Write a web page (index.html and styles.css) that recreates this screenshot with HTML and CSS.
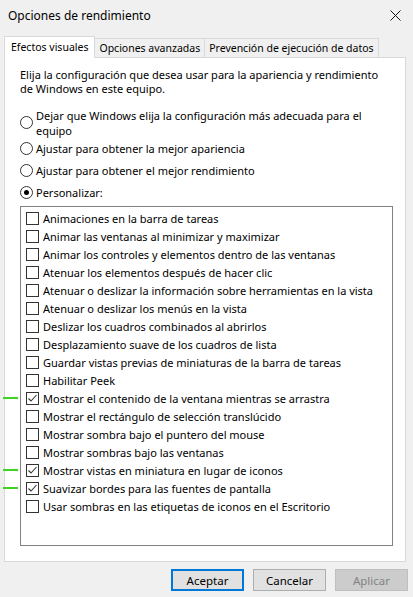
FILE: index.html
```html
<!DOCTYPE html>
<html lang="es">
<head>
<meta charset="utf-8">
<link rel="stylesheet" href="styles.css">
</head>
<body>
<div class="window">
  <div class="titlebar">
    <span class="title">Opciones de rendimiento</span>
    <svg class="close" width="11" height="11" viewBox="0 0 11 11"><path d="M0.5 0.5L10.5 10.5M10.5 0.5L0.5 10.5" stroke="#111" stroke-width="1" fill="none"/></svg>
  </div>
  <div class="tabs">
    <div class="tab active">Efectos visuales</div>
    <div class="tab">Opciones avanzadas</div>
    <div class="tab">Prevención de ejecución de datos</div>
  </div>
  <div class="panel">
    <p class="intro">Elija la configuración que desea usar para la apariencia y rendimiento de Windows en este equipo.</p>
    <div class="radios">
      <label class="radio r1"><span class="rb"></span><span class="rt">Dejar que Windows elija la configuración más adecuada para el equipo</span></label>
      <label class="radio"><span class="rb"></span><span class="rt">Ajustar para obtener la mejor apariencia</span></label>
      <label class="radio"><span class="rb"></span><span class="rt">Ajustar para obtener el mejor rendimiento</span></label>
      <label class="radio on"><span class="rb"></span><span class="rt">Personalizar:</span></label>
    </div>
    <div class="list">
      <div class="item"><span class="cb"></span>Animaciones en la barra de tareas</div>
      <div class="item"><span class="cb"></span>Animar las ventanas al minimizar y maximizar</div>
      <div class="item"><span class="cb"></span>Animar los controles y elementos dentro de las ventanas</div>
      <div class="item"><span class="cb"></span>Atenuar los elementos después de hacer clic</div>
      <div class="item"><span class="cb"></span>Atenuar o deslizar la información sobre herramientas en la vista</div>
      <div class="item"><span class="cb"></span>Atenuar o deslizar los menús en la vista</div>
      <div class="item"><span class="cb"></span>Deslizar los cuadros combinados al abrirlos</div>
      <div class="item"><span class="cb"></span>Desplazamiento suave de los cuadros de lista</div>
      <div class="item"><span class="cb"></span>Guardar vistas previas de miniaturas de la barra de tareas</div>
      <div class="item"><span class="cb"></span>Habilitar Peek</div>
      <div class="item mark"><span class="cb"><svg width="11" height="11" viewBox="0 0 11 11"><path d="M1.5 5.5L4 8L9.5 2" stroke="#333" stroke-width="1.1" fill="none"/></svg></span>Mostrar el contenido de la ventana mientras se arrastra</div>
      <div class="item"><span class="cb"></span>Mostrar el rectángulo de selección translúcido</div>
      <div class="item"><span class="cb"></span>Mostrar sombra bajo el puntero del mouse</div>
      <div class="item"><span class="cb"></span>Mostrar sombras bajo las ventanas</div>
      <div class="item mark"><span class="cb"><svg width="11" height="11" viewBox="0 0 11 11"><path d="M1.5 5.5L4 8L9.5 2" stroke="#333" stroke-width="1.1" fill="none"/></svg></span>Mostrar vistas en miniatura en lugar de iconos</div>
      <div class="item mark"><span class="cb"><svg width="11" height="11" viewBox="0 0 11 11"><path d="M1.5 5.5L4 8L9.5 2" stroke="#333" stroke-width="1.1" fill="none"/></svg></span>Suavizar bordes para las fuentes de pantalla</div>
      <div class="item"><span class="cb"></span>Usar sombras en las etiquetas de iconos en el Escritorio</div>
    </div>
  </div>
  <div class="buttons">
    <button class="btn default">Aceptar</button>
    <button class="btn">Cancelar</button>
    <button class="btn disabled">Aplicar</button>
  </div>
</div>
</body>
</html>
```
FILE: styles.css
```css
html, body {
  margin: 0;
  padding: 0;
  background: #f0f0f0;
}
body {
  font-family: "Noto Sans", "Liberation Sans", sans-serif;
  font-size: 11px;
  color: #000;
  width: 413px;
  height: 597px;
  overflow: hidden;
}
.window {
  width: 413px;
  height: 597px;
}
.titlebar {
  height: 30px;
  display: flex;
  align-items: center;
  justify-content: space-between;
  padding: 0 12px 0 8px;
}
.title {
  font-size: 12px;
}
.close {
  display: block;
}
.tabs {
  display: flex;
  padding-left: 4px;
  height: 27px;
  align-items: flex-end;
  position: relative;
  z-index: 1;
  white-space: nowrap;
  font-size: 10.5px;
}
.tab {
  height: 18px;
  line-height: 18px;
  padding: 0 4px;
  border: 1px solid #d9d9d9;
  border-bottom: none;
  background: #f0f0f0;
  box-sizing: content-box;
  margin-left: -1px;
}
.tab.active {
  background: #fff;
  height: 21px;
  line-height: 20px;
  margin-left: 0;
  margin-bottom: -1px;
  padding: 0 6px;
}
.tab.active + .tab {
  margin-left: 0;
  border-left: none;
}
.panel {
  margin: 0 7px 0 4px;
  height: 505px;
  background: #fff;
  border: 1px solid #d9d9d9;
  box-sizing: border-box;
  padding: 10px 15px 0 15px;
}
.intro {
  margin: 0;
  line-height: 14px;
}
.radios {
  margin-top: 12px;
}
.radio {
  display: flex;
  align-items: flex-start;
  line-height: 15px;
  margin-bottom: 7px;
}
.radio.r1 {
  margin-bottom: 3px;
}
.radio.on {
  margin-bottom: 0;
}
.radio .rb {
  flex: none;
  width: 11px;
  height: 11px;
  border: 1px solid #333;
  border-radius: 50%;
  margin: 1px 3px 0 0;
  box-sizing: content-box;
  position: relative;
}
.radio.r1 .rb {
  margin-top: 8px;
}
.radio.on .rb::after {
  content: "";
  position: absolute;
  left: 3px;
  top: 3px;
  width: 5px;
  height: 5px;
  border-radius: 50%;
  background: #000;
}
.list {
  margin-top: 6px;
  width: 373px;
  height: 340px;
  border: 1px solid #828282;
  box-sizing: border-box;
  padding-top: 2px;
}
.item {
  position: relative;
  display: flex;
  align-items: center;
  height: 18px;
  white-space: nowrap;
}
.cb {
  flex: none;
  width: 11px;
  height: 11px;
  border: 1px solid #333;
  margin: 0 4px 0 5px;
  display: flex;
  align-items: center;
  justify-content: center;
  box-sizing: content-box;
  background: #fff;
}
.cb svg {
  display: block;
}
.item.mark::before {
  content: "";
  position: absolute;
  left: -18px;
  top: 8px;
  width: 15px;
  height: 2px;
  background: #3fd41f;
}
.buttons {
  display: flex;
  justify-content: flex-end;
  gap: 9px;
  padding: 7px 5px 0 0;
}
.btn {
  width: 73px;
  height: 22px;
  font-family: inherit;
  font-size: 11.5px;
  background: #e1e1e1;
  border: 1px solid #adadad;
  color: #000;
  padding: 0;
  margin: 0;
}
.btn.default {
  border: 2px solid #0078d7;
}
.btn.disabled {
  background: #cccccc;
  border-color: #bfbfbf;
  color: #838383;
}
```
